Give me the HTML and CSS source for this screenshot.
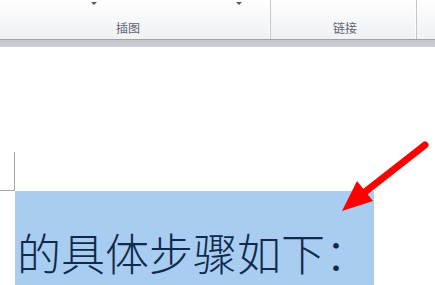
FILE: index.html
```html
<!DOCTYPE html>
<html lang="zh-CN">
<head>
<meta charset="utf-8">
<link rel="stylesheet" href="styles.css">
</head>
<body>
<div class="ribbon">
  <div class="group g1">
    <div class="carets"><span class="caret c1"></span><span class="caret c2"></span></div>
    <div class="label l1">插图</div>
  </div>
  <div class="sep"></div>
  <div class="group g2">
    <div class="carets"></div>
    <div class="label l2">链接</div>
  </div>
  <div class="sep"></div>
  <div class="group g3"></div>
</div>
<div class="band"></div>
<div class="page">
  <div class="corner"></div>
  <div class="sel"><span class="txt">的具体步骤如下：</span></div>
</div>
<svg class="arrow" width="435" height="285" viewBox="0 0 435 285">
  <line x1="425" y1="145" x2="356" y2="199" stroke="#ff0000" stroke-width="7" stroke-linecap="round"/>
  <polygon points="342,211 357,181 373,201" fill="#ff0000"/>
</svg>
</body>
</html>
```
FILE: styles.css
```css
html, body {
  margin: 0;
  padding: 0;
  background: #ffffff;
}
body {
  width: 435px;
  height: 285px;
  overflow: hidden;
  position: relative;
  font-family: "Noto Sans CJK SC", "Noto Sans", sans-serif;
}
.ribbon {
  display: flex;
  height: 39px;
  background: linear-gradient(to bottom, #ffffff 0%, #f7f8f9 45%, #eff1f3 100%);
}
.group {
  display: flex;
  flex-direction: column;
}
.g1 { width: 269px; }
.g2 { width: 144px; }
.g3 { flex: 1; }
.carets {
  display: flex;
  height: 6px;
  padding-top: 2px;
}
.caret {
  width: 0;
  height: 0;
  border-left: 3px solid transparent;
  border-right: 3px solid transparent;
  border-top: 3px solid #5a5a5a;
}
.c1 { margin-left: 91px; }
.c2 { margin-left: 139px; }
.label {
  margin-top: 13px;
  font-size: 12px;
  line-height: 14px;
  color: #5b6572;
}
.l1 { padding-left: 116px; }
.l2 { padding-left: 62px; }
.sep {
  width: 1px;
  border-left: 1px solid #fdfdfd;
  background: #c3c7cd;
}
.band {
  height: 8px;
  border-top: 1px solid #9ea3aa;
  background: linear-gradient(to bottom, #c3c7cc, #cdd0d4);
  box-sizing: border-box;
}
.page {
  height: 238px;
  padding-top: 105px;
  box-sizing: border-box;
  overflow: hidden;
}
.corner {
  width: 14px;
  height: 38px;
  border-right: 1px solid #a6a6a6;
  border-bottom: 1px solid #a6a6a6;
}
.sel {
  margin-left: 15px;
  width: 359px;
  height: 100px;
  background: #a9cdf1;
  padding-top: 36px;
  box-sizing: border-box;
}
.txt {
  display: block;
  padding-left: 2px;
  font-size: 44px;
  line-height: 50px;
  font-weight: 300;
  color: #0e2a4c;
  white-space: nowrap;
}
.arrow {
  position: absolute;
  left: 0;
  top: 0;
}
```
